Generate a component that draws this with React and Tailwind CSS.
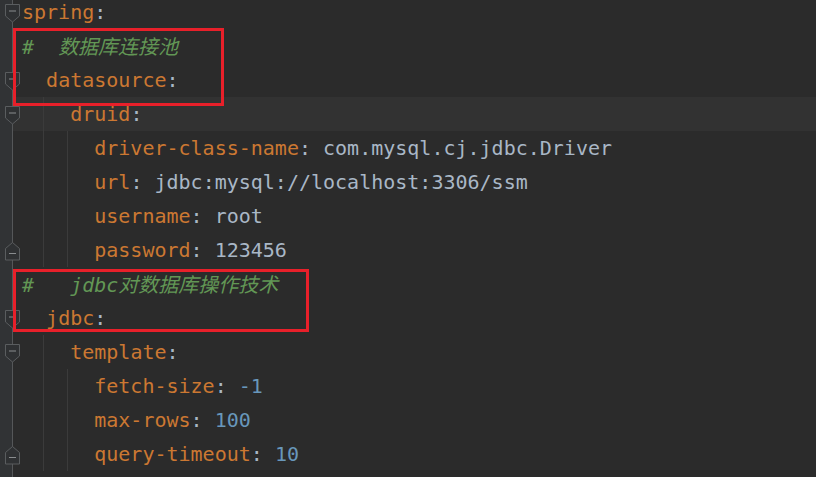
const rows = [
  { indent: 0, key: "spring", fold: "start" },
  { indent: 0, comment: "#  ", cjk: "数据库连接池" },
  { indent: 2, key: "datasource", fold: "start" },
  { indent: 4, key: "druid", fold: "start", caret: true, guides: 1 },
  { indent: 6, key: "driver-class-name", value: "com.mysql.cj.jdbc.Driver", guides: 2 },
  { indent: 6, key: "url", value: "jdbc:mysql://localhost:3306/ssm", guides: 2 },
  { indent: 6, key: "username", value: "root", guides: 2 },
  { indent: 6, key: "password", value: "123456", fold: "end", guides: 2 },
  { indent: 0, comment: "#   jdbc", cjk: "对数据库操作技术" },
  { indent: 2, key: "jdbc", fold: "start" },
  { indent: 4, key: "template", fold: "start", guides: 1 },
  { indent: 6, key: "fetch-size", value: "-1", num: true, guides: 2 },
  { indent: 6, key: "max-rows", value: "100", num: true, guides: 2 },
  { indent: 6, key: "query-timeout", value: "10", num: true, fold: "end", guides: 2 },
];

const mono = { fontFamily: '"DejaVu Sans Mono", "Noto Sans CJK SC", monospace' };

function FoldMarker({ kind }) {
  const pts = kind === "start" ? "0.5,0.5 14.5,0.5 14.5,12 7.5,18 0.5,12" : "7.5,0.5 14.5,6.5 14.5,18 0.5,18 0.5,6.5";
  const minusY = kind === "start" ? 7 : 11.5;
  return (
    <svg className="absolute left-[5px] top-[9px]" width="16" height="19" viewBox="0 0 16 19">
      <polygon points={pts} fill="#2f3133" stroke="#5a5d5f" strokeWidth="1" />
      <line x1="4" y1={minusY} x2="11" y2={minusY} stroke="#8a8d8f" strokeWidth="1" />
    </svg>
  );
}

function Row({ r }) {
  return (
    <div className={`relative flex h-[34px] ${r.caret ? "bg-[#323232]" : ""}`}>
      {/* indent guides */}
      {r.guides >= 1 && <div className="absolute left-[43px] top-0 bottom-0 w-px bg-[#3b3b3b]" />}
      {r.guides >= 2 && <div className="absolute left-[67px] top-0 bottom-0 w-px bg-[#3b3b3b]" />}
      <div className="relative w-[13px] shrink-0 border-r border-[#555759] bg-[#313335]">
        {r.fold && <FoldMarker kind={r.fold} />}
      </div>
      <div className="whitespace-pre pl-[9px] text-[20px] leading-[34px]" style={mono}>
        {" ".repeat(r.indent)}
        {r.comment ? (
          <span className="italic text-[#629755]">
            {r.comment}
            <span style={{ fontFamily: '"Noto Sans CJK SC", sans-serif' }}>{r.cjk}</span>
          </span>
        ) : (
          <>
            <span className="text-[#cc7832]">{r.key}</span>
            <span className="text-[#a9b7c6]">:</span>
            {r.value && (
              <span className={r.num ? "text-[#6897bb]" : "text-[#a9b7c6]"}>{" " + r.value}</span>
            )}
          </>
        )}
      </div>
    </div>
  );
}

export default function App() {
  return (
    <div className="relative h-[477px] w-[816px] overflow-hidden bg-[#2b2b2b]">
      <div className="flex flex-col mt-[-5px]">
        {rows.map((r, i) => (
          <Row key={i} r={r} />
        ))}
        <div className="h-[40px] w-[13px] border-r border-[#555759] bg-[#313335]" />
      </div>
      {/* annotation boxes */}
      <div className="absolute left-[13px] top-[28px] h-[78px] w-[211px] border-[3px] border-[#e8202a]" />
      <div className="absolute left-[13px] top-[269px] h-[63px] w-[296px] border-[3px] border-[#e8202a]" />
    </div>
  );
}
